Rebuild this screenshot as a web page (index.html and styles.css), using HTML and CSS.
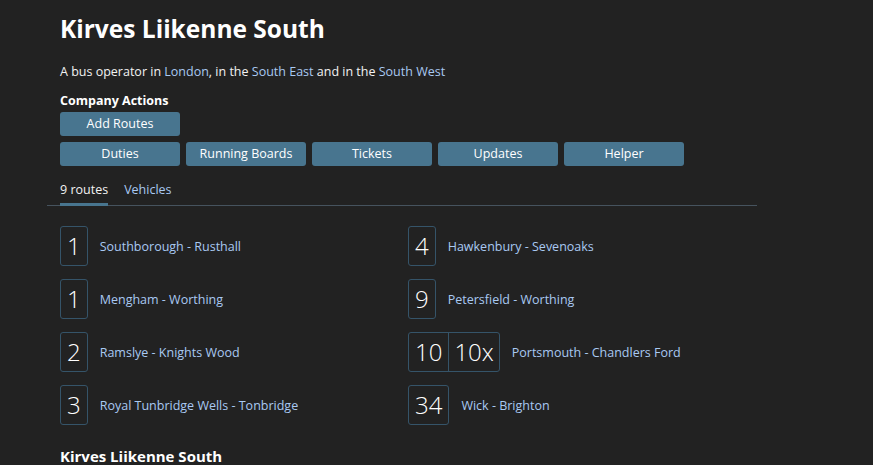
FILE: index.html
```html
<!doctype html>
<html lang="en">
<head>
	<meta charset="UTF-8">
	<title>Kirves Liikenne South</title>
	<link rel="stylesheet" href="styles.css">
</head>
<body>
	<div class="page">
		<h1 class="title">Kirves Liikenne South</h1>
		<p class="intro">A bus operator in <a href="#">London</a>, in the <a href="#">South East</a> and in the <a href="#">South West</a></p>

		<!-- 操作按钮 -->
		<h4 class="actions-title">Company Actions</h4>
		<div class="actions">
			<a class="btn" href="#">Add Routes</a>
		</div>
		<div class="actions">
			<a class="btn" href="#">Duties</a>
			<a class="btn" href="#">Running Boards</a>
			<a class="btn" href="#">Tickets</a>
			<a class="btn" href="#">Updates</a>
			<a class="btn" href="#">Helper</a>
		</div>

		<!-- 标签 -->
		<ul class="tabs">
			<li class="active"><a href="#">9 routes</a></li>
			<li><a href="#">Vehicles</a></li>
		</ul>

		<!-- 线路列表 -->
		<ul class="routes">
			<li><span class="nums"><span>1</span></span><a href="#">Southborough - Rusthall</a></li>
			<li><span class="nums"><span>4</span></span><a href="#">Hawkenbury - Sevenoaks</a></li>
			<li><span class="nums"><span>1</span></span><a href="#">Mengham - Worthing</a></li>
			<li><span class="nums"><span>9</span></span><a href="#">Petersfield - Worthing</a></li>
			<li><span class="nums"><span>2</span></span><a href="#">Ramslye - Knights Wood</a></li>
			<li><span class="nums"><span>10</span><span>10x</span></span><a href="#">Portsmouth - Chandlers Ford</a></li>
			<li><span class="nums"><span>3</span></span><a href="#">Royal Tunbridge Wells - Tonbridge</a></li>
			<li><span class="nums"><span>34</span></span><a href="#">Wick - Brighton</a></li>
		</ul>

		<h3 class="footer-title">Kirves Liikenne South</h3>
	</div>
</body>
</html>
```

FILE: styles.css
```css
* {
	margin: 0px;
	padding: 0px;
}

ul,ul li {
	list-style: none;
}

a {
	text-decoration: none;
	color: #a9c9f2;
}

body {
	background: #222222;
	color: #f2f2f2;
	font-family: "Open Sans", "Noto Sans", sans-serif;
	font-size: 12.5px;
}

.page {
	width: 710px;
	margin-left: 47px;
}

.title {
	padding: 13px 13px 0px;
	font-size: 24.5px;
	line-height: 32px;
	font-weight: bold;
	color: #fff;
}

.intro {
	padding: 18px 13px 0px;
	line-height: 18px;
}

.actions-title {
	padding: 12px 13px 0px;
	font-size: 12.5px;
	line-height: 16px;
	color: #fff;
}

.actions {
	display: flex;
	gap: 6px;
	padding: 3px 13px 3px;
}

.btn {
	width: 120px;
	height: 24px;
	line-height: 24px;
	display: block;
	background: #48758f;
	border-radius: 3px;
	color: #fff;
	text-align: center;
}

.tabs {
	display: flex;
	gap: 16px;
	margin-top: 4px;
	padding: 0px 13px;
	border-bottom: 1px solid #46535e;
}

.tabs li a {
	display: block;
	padding-top: 5px;
	line-height: 24px;
	padding-bottom: 1px;
	border-bottom: 3px solid transparent;
	margin-bottom: -1px;
}

.tabs li.active a {
	color: #f2f2f2;
	border-bottom-color: #48758f;
}

.routes {
	display: grid;
	grid-template-columns: 1fr 1fr;
	column-gap: 12px;
	row-gap: 13px;
	padding: 20px 13px 0px;
}

.routes li {
	display: flex;
	align-items: center;
	gap: 12px;
}

.nums {
	display: flex;
	border: 1px solid #355469;
	border-radius: 3px;
}

.nums span {
	height: 38px;
	line-height: 38px;
	padding: 0px 6px;
	font-size: 24px;
	font-weight: 300;
	color: #fff;
	text-align: center;
}

.nums span + span {
	border-left: 1px solid #355469;
	padding: 0px 5px;
}

.footer-title {
	padding: 21px 13px 0px;
	font-size: 15px;
	line-height: 20px;
	color: #fff;
}
```
